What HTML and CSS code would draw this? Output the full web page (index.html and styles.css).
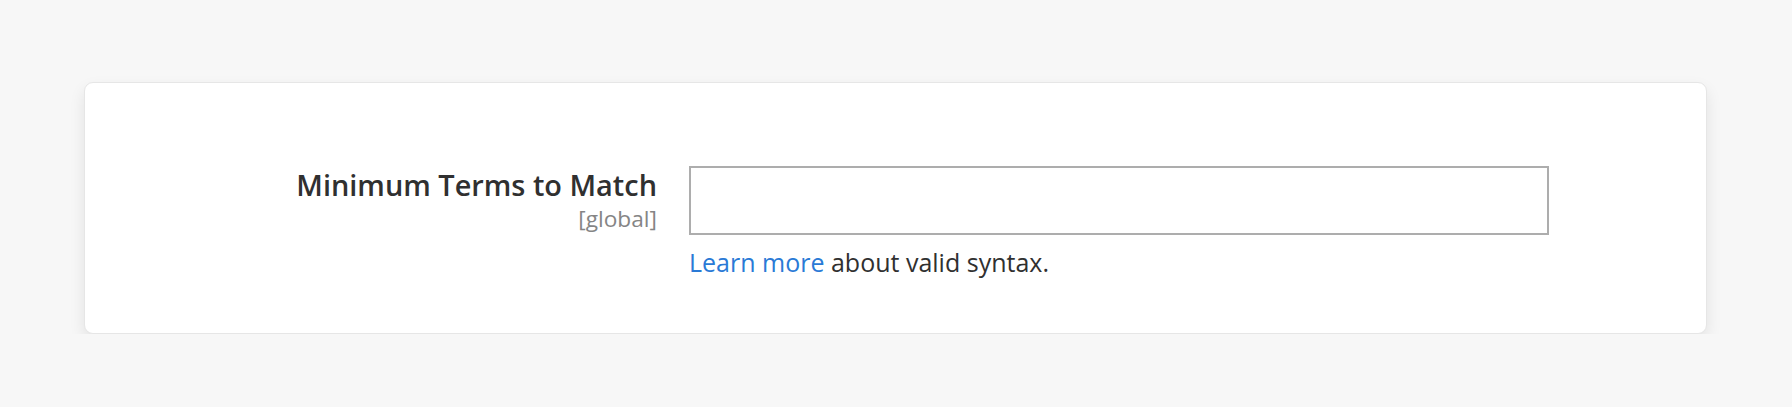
FILE: index.html
```html
<!DOCTYPE html>
<html lang="en">
<head>
<meta charset="utf-8">
<title>Minimum Terms to Match</title>
<link rel="stylesheet" href="styles.css">
</head>
<body>
  <div class="page">
    <section class="card">
      <div class="field">
        <div class="field-label">
          <span class="label-text">Minimum Terms to Match</span>
          <span class="scope">[global]</span>
        </div>
        <div class="field-control">
          <input class="text-input" type="text" aria-label="Minimum Terms to Match">
          <p class="note"><a class="link" href="#">Learn more</a> about valid syntax.</p>
        </div>
      </div>
    </section>
  </div>
</body>
</html>
```

FILE: styles.css
```css
html, body {
  margin: 0;
  padding: 0;
  background: #f7f7f7;
  font-family: "Open Sans", "Noto Sans", sans-serif;
  color: #303030;
}

.page {
  padding: 82px 85px 0 84px;
}

.card {
  background: #ffffff;
  border: 1px solid #e6e6e6;
  border-radius: 9px;
  box-shadow: 0 7px 16px rgba(0, 0, 0, 0.085);
  padding: 83px 0 54px 0;
}

.field {
  display: grid;
  grid-template-columns: 572px 860px;
  column-gap: 32px;
  align-items: start;
}

.field-label {
  display: flex;
  flex-direction: column;
  align-items: flex-end;
  text-align: right;
}

.label-text {
  font-size: 28.9px;
  font-weight: 600;
  line-height: 38px;
  color: #303030;
}

.scope {
  font-size: 22.7px;
  line-height: 30px;
  color: #858585;
}

.field-control {
  display: flex;
  flex-direction: column;
}

.text-input {
  box-sizing: border-box;
  width: 860px;
  height: 69px;
  margin: 0;
  border: 2px solid #adadad;
  border-radius: 0;
  background: #ffffff;
  font-family: inherit;
  font-size: 25px;
  padding: 0 16px;
  outline: none;
}

.note {
  margin: 10px 0 0 0;
  font-size: 25px;
  line-height: 34px;
  color: #303030;
}

.link {
  color: #2a7ad6;
  text-decoration: none;
}
```
